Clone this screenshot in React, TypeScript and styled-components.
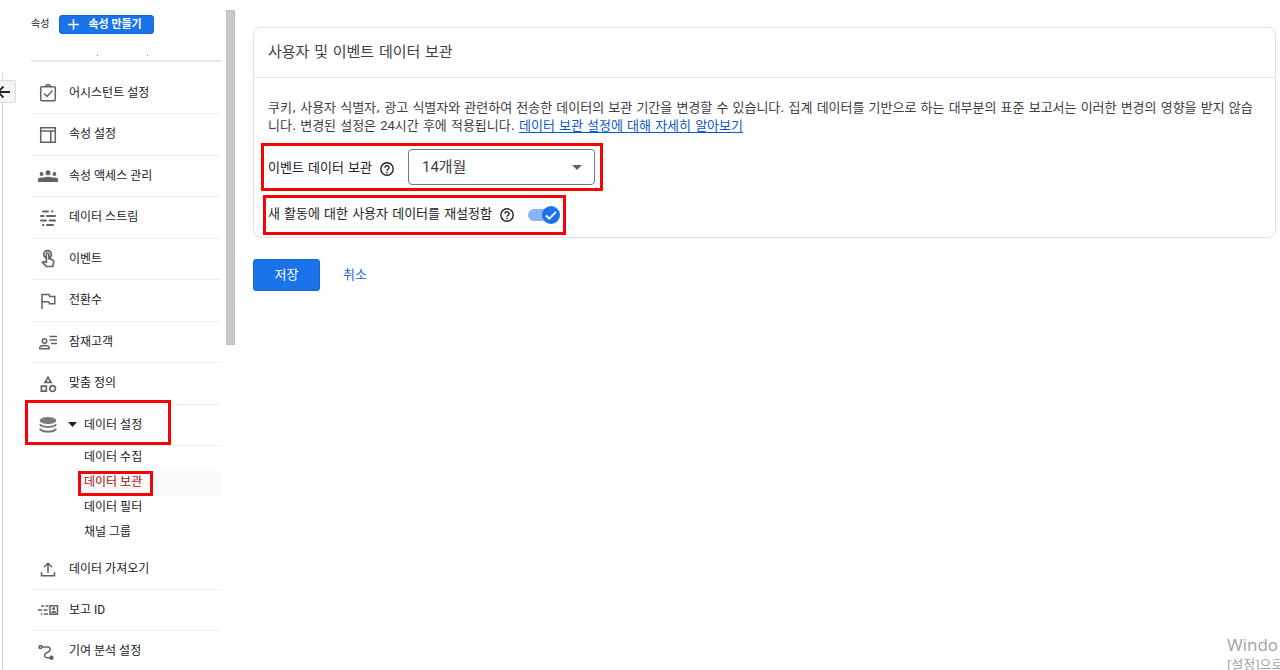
import React from "react";
import styled, { createGlobalStyle } from "styled-components";
import { MdOutlineCategory, MdOutlineTouchApp } from "react-icons/md";

const GlobalStyle = createGlobalStyle`
  *, *::before, *::after { box-sizing: border-box; }
  body {
    margin: 0;
    background: #fff;
    color: #202124;
    font-family: Roboto, "Noto Sans CJK KR", sans-serif;
    font-size: 12px;
  }
  button, select { font: inherit; }
  ul { list-style: none; margin: 0; padding: 0; }
`;

const Page = styled.div`
  position: relative;
  display: flex;
  height: 100vh;
  overflow: hidden;
`;

const Rail = styled.div`
  flex: none;
  width: 31px;
  padding-top: 73px;
  display: flex;
`;

const RailLine = styled.div`
  flex: 1;
  margin-left: 2px;
  border-left: 1px solid #d6d6d6;
`;

const BackButton = styled.button`
  position: absolute;
  left: -1px;
  top: 80px;
  width: 17px;
  height: 23px;
  padding: 0;
  display: flex;
  align-items: center;
  justify-content: flex-end;
  border: 1px solid #dadce0;
  border-radius: 0 2px 2px 0;
  background: #f4f4f5;
  overflow: hidden;

  svg { flex: none; margin-right: 5px; }
`;

const Sidebar = styled.aside`
  flex: none;
  width: 190px;
`;

const SidebarHead = styled.div`
  height: 62px;
  padding-top: 15px;
  border-bottom: 2px solid #e6e7ea;
`;

const HeadRow = styled.div`
  display: flex;
  align-items: flex-start;
  gap: 10px;
  font-size: 10px;
  line-height: 18px;
`;

const PropertyName = styled.div`
  display: flex;
  gap: 49px;
  padding: 21px 0 0 66px;

  i { width: 1px; height: 1px; background: #8a8a8a; }
`;

const CreateButton = styled.button`
  display: flex;
  align-items: center;
  gap: 9px;
  height: 19px;
  padding: 0 11px 0 8px;
  border: 1px solid #1465d8;
  border-radius: 3px;
  background: #1a73e8;
  color: #fff;
  font-size: 11px;
  font-weight: 700;
  line-height: 16px;
  white-space: nowrap;
`;

const Menu = styled.ul`
  && { padding-top: 11px; }
`;

const MenuItem = styled.li`
  position: relative;
`;

const MenuLink = styled.a<{ $tall?: boolean }>`
  display: flex;
  align-items: center;
  height: ${(p) => (p.$tall ? 42 : 41)}px;
  margin-left: 1px;
  padding-bottom: 4px;
  border-bottom: 1px solid #eeeff1;
  color: #202124;
  text-decoration: none;
  white-space: nowrap;
`;

const IconBox = styled.span`
  flex: none;
  display: flex;
  justify-content: center;
  width: 22px;
  margin: 4px 10px 0 5px;
  color: #5f6368;

  svg { display: block; }
`;

const Caret = styled.svg`
  flex: none;
  margin: 3px 7px 0 -1px;
`;

const SubMenu = styled.ul`
  && { padding-bottom: 3px; }
`;

const SubItem = styled.li<{ $active?: boolean }>`
  position: relative;
  margin-left: 47px;
  background: ${(p) => (p.$active ? "#f8f9fa" : "transparent")};
`;

const SubLink = styled.a<{ $active?: boolean }>`
  display: block;
  height: 25px;
  padding-left: 6px;
  line-height: 23px;
  color: ${(p) => (p.$active ? "#a50e0e" : "#202124")};
  text-decoration: none;
`;

const Marker = styled.span<{ $inset: string; $width?: string; $height?: string }>`
  position: absolute;
  inset: ${(p) => p.$inset};
  width: ${(p) => p.$width ?? "auto"};
  height: ${(p) => p.$height ?? "auto"};
  border: 3px solid #f30409;
  pointer-events: none;
`;

const ScrollThumb = styled.div`
  flex: none;
  width: 9px;
  height: 50vh;
  margin: 10px 18px 0 5px;
  background: #c8c8c8;
  border: 1px solid #bfbfbf;
`;

const Main = styled.main`
  flex: 1;
  min-width: 0;
  padding: 27px 4px 0 0;
`;

const Card = styled.section`
  border: 1px solid #dfe1e5;
  border-radius: 8px;
  font-family: "DejaVu Sans", "Noto Sans CJK KR", sans-serif;
`;

const CardTitle = styled.h1`
  margin: 0;
  padding: 0 14px;
  border-bottom: 1px solid #e4e5e8;
  color: #3c4043;
  font-size: 15px;
  font-weight: 400;
  line-height: 49px;
`;

const CardBody = styled.div`
  display: flex;
  flex-direction: column;
  align-items: flex-start;
  padding: 21px 0 6px 14px;
  font-size: 13px;
`;

const Description = styled.p`
  margin: 0 0 14px;
  color: #3c4043;
  line-height: 18px;

  a { color: #0b57d0; text-underline-offset: 2px; }
`;

const Digits = styled.span`
  font-family: Roboto, sans-serif;
`;

const SettingRow = styled.div`
  position: relative;
  display: flex;
  align-items: center;
  height: 36px;
  margin-bottom: 10px;
  white-space: nowrap;

  &:last-child { margin-bottom: 0; }
`;

const SettingLabel = styled.label`
  padding-bottom: 2px;
`;

const HelpButton = styled.button`
  margin: 4px 14px 0 8px;
  padding: 0;
  border: 0;
  background: none;
  color: #202124;

  svg { display: block; }
`;

const SelectBox = styled.span`
  position: relative;
  display: flex;
  align-items: center;

  svg { position: absolute; right: 13px; pointer-events: none; }
`;

const Select = styled.select`
  appearance: none;
  width: 187px;
  height: 36px;
  padding: 0 30px 0 13px;
  border: 1px solid #74787c;
  border-radius: 4px;
  background: #fff;
  color: #3c4043;
  font-family: Roboto, "Noto Sans CJK KR", sans-serif;
  font-size: 15px;
`;

const Switch = styled.input`
  appearance: none;
  width: 28px;
  height: 12px;
  margin: 0;
  border-radius: 6px;
  background: #8ab4f8;
`;

const SwitchBox = styled.span`
  position: relative;
  display: flex;
  width: 32px;
  margin-top: 4px;

  svg { position: absolute; right: 0; top: -3px; pointer-events: none; }
`;

const Actions = styled.div`
  display: flex;
  gap: 9px;
  margin-top: 21px;
`;

const ActionButton = styled.button<{ $primary?: boolean }>`
  min-width: 67px;
  height: 32px;
  padding: 0 13px 3px;
  border: 1px solid ${(p) => (p.$primary ? "#1465d8" : "transparent")};
  border-radius: 3px;
  background: ${(p) => (p.$primary ? "#1a73e8" : "transparent")};
  color: ${(p) => (p.$primary ? "#fff" : "#1967d2")};
  font-size: 13px;
  text-align: ${(p) => (p.$primary ? "center" : "left")};
`;

const Watermark = styled.div`
  position: absolute;
  left: calc(100% - 53px);
  bottom: -3px;
  color: #a3a3a3;
  font-family: "Open Sans", "Noto Sans CJK KR", sans-serif;
  white-space: nowrap;
  pointer-events: none;

  strong { display: block; font-size: 17px; font-weight: 400; line-height: 20px; }
  span { display: block; font-size: 13px; line-height: 18px; }
`;

const line = { fill: "none", stroke: "currentColor", strokeWidth: 1.5 } as const;

const AssistantIcon = () => (
  <svg width="18" height="20" viewBox="0 0 18 20" {...line}>
    <rect x="1.700" y="3.700" width="14.600" height="14" rx="1" />
    <path d="M6 3.500c.6-.2.900-.6 1.200-1.100.8-1.200 2.800-1.200 3.600 0 .3.500.6.900 1.200 1.100M5 10.500l3 3 5.500-6" />
  </svg>
);

const LayoutIcon = () => (
  <svg width="18" height="18" viewBox="0 0 18 18" {...line}>
    <path d="M1.700 1.700h14.600v14.600H1.700zM1.700 5h14.600M11.800 5v11.300" />
  </svg>
);

const GroupIcon = () => (
  <svg width="20" height="14" viewBox="0 0 20 14" fill="currentColor">
    <circle cx="3.500" cy="5" r="1.900" />
    <circle cx="10" cy="3.800" r="2.500" />
    <circle cx="16.500" cy="5" r="1.900" />
    <path d="M0 13v-2.500C0 8.900 2.600 8.300 5 8.700c3-1.400 7-1.400 10 0 2.400-.4 5 .2 5 1.800V13z" />
  </svg>
);

const StreamIcon = () => (
  <svg width="18" height="18" viewBox="0 0 18 18" {...line} strokeWidth={2} strokeLinecap="round">
    <path d="M4 2.500h5M13 2.500h.5M2 7h2.500M8 7h8M2 11.500h5M10.500 11.500h5.500M4 16h.5M8 16h6" />
  </svg>
);

const FlagIcon = () => (
  <svg width="16" height="18" viewBox="0 0 16 18" {...line}>
    <path d="M2 17V2.500h7l.8 2h5v7.300H9.500l-.8-2H2" />
  </svg>
);

const AudienceIcon = () => (
  <svg width="20" height="18" viewBox="0 0 20 18" {...line}>
    <circle cx="6.500" cy="8" r="2.200" />
    <path d="M1.800 15.800v-1c0-1.400 2.500-2.300 4.700-2.300s4.700.9 4.700 2.300v1zM11.500 3.500H19M11.500 7H19M13 10.500h6" />
  </svg>
);

const DatabaseIcon = () => (
  <svg width="18" height="18" viewBox="0 0 18 18" {...line} stroke="#77797c" strokeWidth={2}>
    <ellipse cx="9" cy="4.500" rx="8.300" ry="3.600" fill="#77797c" stroke="none" />
    <path d="M1 8.300c1.200 3.500 14.800 3.500 16 0M1 12.600c1.200 4 14.800 4 16 0" />
  </svg>
);

const UploadIcon = () => (
  <svg width="18" height="18" viewBox="0 0 18 18" {...line}>
    <path d="M9 13V3.500M5 7.300l4-4 4 4M2.500 12v3.800h13V12" />
  </svg>
);

const ReportIcon = () => (
  <svg width="22" height="12" viewBox="0 0 22 12" {...line}>
    <path d="M4 2h3M8.500 2h3M1 6h4M6.500 6h4M4 10h1.500M7 10h4M13 1.700h7.500v8.600H13z" />
    <circle cx="16.700" cy="4.500" r="1.500" fill="currentColor" stroke="none" />
    <path d="M14 9c.6-2.600 4.800-2.600 5.400 0z" fill="currentColor" stroke="none" />
  </svg>
);

const AttributionIcon = () => (
  <svg width="20" height="18" viewBox="0 0 20 18" {...line}>
    <circle cx="2.500" cy="4" r="1.500" />
    <path d="M4 4h6a2.300 2.300 0 0 1 1.400 4.100L7.500 10.700a2.200 2.200 0 0 0 1.200 4H12" />
    <circle cx="13.500" cy="14.700" r="2.200" fill="currentColor" stroke="none" />
  </svg>
);

const HelpIcon = () => (
  <svg width="14" height="14" viewBox="0 0 14 14" fill="none" stroke="currentColor" strokeWidth="1.4">
    <circle cx="7" cy="7" r="6.200" />
    <path d="M5 5.700a2 2 0 1 1 3.200 1.500c-.7.500-1.200.8-1.200 1.600M7 9.800v1.400" />
  </svg>
);

const before = [
  { label: "어시스턴트 설정", icon: <AssistantIcon /> },
  { label: "속성 설정", icon: <LayoutIcon /> },
  { label: "속성 액세스 관리", icon: <GroupIcon /> },
  { label: "데이터 스트림", icon: <StreamIcon /> },
  { label: "이벤트", icon: <MdOutlineTouchApp size={20} /> },
  { label: "전환수", icon: <FlagIcon /> },
  { label: "잠재고객", icon: <AudienceIcon /> },
  { label: "맞춤 정의", icon: <MdOutlineCategory size={20} /> },
];

const dataSettings = ["데이터 수집", "데이터 보관", "데이터 필터", "채널 그룹"];

const after = [
  { label: "데이터 가져오기", icon: <UploadIcon /> },
  { label: "보고 ID", icon: <ReportIcon /> },
  { label: "기여 분석 설정", icon: <AttributionIcon /> },
];

export default function App() {
  return (
    <Page>
      <GlobalStyle />
      <Rail>
        <RailLine />
        <BackButton aria-label="뒤로">
          <svg width="14" height="14" viewBox="0 0 14 14" fill="none" stroke="#202124" strokeWidth="1.8">
            <path d="M14 7H2M7.500 1.500L2 7l5.500 5.500" />
          </svg>
        </BackButton>
      </Rail>

      <Sidebar>
        <SidebarHead>
          <HeadRow>
            <span>속성</span>
            <CreateButton>
              <svg width="11" height="11" viewBox="0 0 11 11" stroke="#fff" strokeWidth="1.500">
                <path d="M5.500 0v11M0 5.500h11" />
              </svg>
              속성 만들기
            </CreateButton>
          </HeadRow>
          <PropertyName aria-hidden="true"><i /><i /></PropertyName>
        </SidebarHead>
        <Menu>
          {before.map((item, i) => (
            <MenuItem key={item.label}>
              <MenuLink href="#" $tall={i % 2 === 1}>
                <IconBox>{item.icon}</IconBox>
                {item.label}
              </MenuLink>
            </MenuItem>
          ))}
          <MenuItem>
            <MenuLink href="#" aria-expanded="true">
              <IconBox><DatabaseIcon /></IconBox>
              <Caret width="9" height="5" viewBox="0 0 9 5"><path d="M0 0h9L4.500 5z" fill="#202124" /></Caret>
              데이터 설정
            </MenuLink>
            <Marker $inset="-5px auto auto -6px" $width="146px" $height="45px" />
            <SubMenu>
              {dataSettings.map((label) => {
                const active = label === "데이터 보관";
                return (
                  <SubItem key={label} $active={active}>
                    <SubLink href="#" $active={active}>{label}</SubLink>
                    {active && <Marker $inset="0 auto 0 0" $width="75px" />}
                  </SubItem>
                );
              })}
            </SubMenu>
          </MenuItem>
          {after.map((item, i) => (
            <MenuItem key={item.label}>
              <MenuLink href="#" $tall={i === 2}>
                <IconBox>{item.icon}</IconBox>
                {item.label}
              </MenuLink>
            </MenuItem>
          ))}
        </Menu>
      </Sidebar>
      <ScrollThumb />

      <Main>
        <Card>
          <CardTitle>사용자 및 이벤트 데이터 보관</CardTitle>
          <CardBody>
            <Description>
              쿠키, 사용자 식별자, 광고 식별자와 관련하여 전송한 데이터의 보관 기간을 변경할 수 있습니다. 집계 데이터를 기반으로 하는 대부분의 표준 보고서는 이러한 변경의 영향을 받지 않습
              <br />
              니다. 변경된 설정은 <Digits>24</Digits>시간 후에 적용됩니다. <a href="#">데이터 보관 설정에 대해 자세히 알아보기</a>
            </Description>
            <SettingRow>
              <SettingLabel htmlFor="retention">이벤트 데이터 보관</SettingLabel>
              <HelpButton aria-label="도움말"><HelpIcon /></HelpButton>
              <SelectBox>
                <Select id="retention" defaultValue="14">
                  <option value="14">14개월</option>
                </Select>
                <svg width="10" height="5" viewBox="0 0 10 5"><path d="M0 0h10L5 5z" fill="#5f6368" /></svg>
              </SelectBox>
              <Marker $inset="-6px -8px -6px -7px" />
            </SettingRow>
            <SettingRow>
              <SettingLabel htmlFor="reset">새 활동에 대한 사용자 데이터를 재설정함</SettingLabel>
              <HelpButton aria-label="도움말"><HelpIcon /></HelpButton>
              <SwitchBox>
                <Switch id="reset" type="checkbox" role="switch" defaultChecked />
                <svg width="18" height="18" viewBox="0 0 18 18">
                  <circle cx="9" cy="9" r="9" fill="#1a73e8" />
                  <path d="M4 9.500l3.300 3.200L14 5.800" fill="none" stroke="#fff" strokeWidth="1.800" />
                </svg>
              </SwitchBox>
              <Marker $inset="0 -6px -4px -5px" />
            </SettingRow>
          </CardBody>
        </Card>
        <Actions>
          <ActionButton $primary>저장</ActionButton>
          <ActionButton>취소</ActionButton>
        </Actions>
      </Main>

      <Watermark>
        <strong>Windo</strong>
        <span>[설정]으로</span>
      </Watermark>
    </Page>
  );
}
